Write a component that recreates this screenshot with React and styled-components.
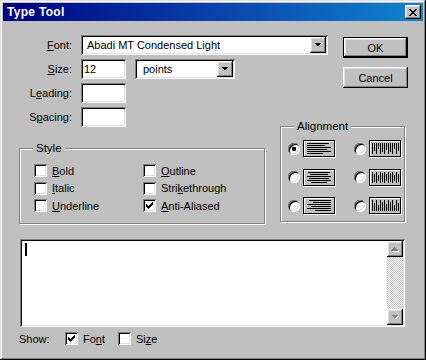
import React from "react";
import styled, { createGlobalStyle, css } from "styled-components";

const GlobalStyle = createGlobalStyle`
  body {
    margin: 0;
    background: #c0c0c0;
    font-family: "Liberation Sans", Arial, sans-serif;
    font-size: 11px;
    color: #000;
  }
`;

const raised = css`
  background: #c0c0c0;
  box-shadow: inset -1px -1px 0 #000, inset 1px 1px 0 #fff,
    inset -2px -2px 0 #808080, inset 2px 2px 0 #dfdfdf;
`;

const sunken = css`
  background: #fff;
  box-shadow: inset 1px 1px 0 #808080, inset -1px -1px 0 #fff,
    inset 2px 2px 0 #000, inset -2px -2px 0 #dfdfdf;
`;

const Window = styled.div`
  box-sizing: border-box;
  width: 426px;
  height: 360px;
  padding: 3px;
  background: #c0c0c0;
  box-shadow: inset -1px -1px 0 #000, inset 1px 1px 0 #dfdfdf,
    inset -2px -2px 0 #808080, inset 2px 2px 0 #fff;
  display: flex;
  flex-direction: column;
`;

const TitleBar = styled.div`
  height: 18px;
  display: flex;
  align-items: center;
  justify-content: space-between;
  padding: 0 2px 0 4px;
  background: linear-gradient(90deg, #000080 0%, #1084d0 100%);
`;

const Title = styled.span`
  color: #fff;
  font-weight: bold;
  font-size: 12px;
  letter-spacing: 0.3px;
`;

const CloseButton = styled.div`
  ${raised};
  width: 16px;
  height: 14px;
  display: flex;
  align-items: center;
  justify-content: center;
`;

const Body = styled.div`
  flex: 1;
  display: flex;
  flex-direction: column;
  padding: 14px 15px 0 16px;
`;

const TopSection = styled.div`
  display: flex;
  justify-content: space-between;
  align-items: flex-start;
`;

const Fields = styled.div`
  display: flex;
  flex-direction: column;
  gap: 4px;
`;

const FieldRow = styled.div`
  display: flex;
  align-items: center;
  height: 20px;
`;

const Label = styled.span`
  width: 53px;
  margin-right: 9px;
  text-align: right;
`;

const TextBox = styled.div`
  ${sunken};
  box-sizing: border-box;
  width: 45px;
  height: 20px;
  padding: 2px 3px;
  line-height: 16px;
`;

const Combo = styled.div`
  ${sunken};
  box-sizing: border-box;
  width: ${(p) => p.$width}px;
  height: 20px;
  margin-left: ${(p) => p.$gap || 0}px;
  padding: 2px 2px 2px ${(p) => p.$indent}px;
  display: flex;
  align-items: center;
  justify-content: space-between;
`;

const DropButton = styled.div`
  ${raised};
  width: 16px;
  height: 16px;
  display: flex;
  align-items: center;
  justify-content: center;
`;

const Buttons = styled.div`
  display: flex;
  flex-direction: column;
  gap: 9px;
  margin-top: 2px;
`;

const Button = styled.div`
  ${raised};
  box-sizing: border-box;
  width: 65px;
  height: 21px;
  display: flex;
  align-items: center;
  justify-content: center;
  ${(p) =>
    p.$default &&
    css`
      box-shadow: inset 0 0 0 1px #000, inset -2px -2px 0 #000,
        inset 2px 2px 0 #fff, inset -3px -3px 0 #808080,
        inset 3px 3px 0 #dfdfdf;
    `}
`;

const GroupsRow = styled.div`
  display: flex;
  justify-content: space-between;
  align-items: flex-start;
  margin-top: -1px;
  padding-right: 3px;
`;

const Group = styled.div`
  position: relative;
  box-sizing: border-box;
  width: ${(p) => p.$width}px;
  height: ${(p) => p.$height}px;
  margin-top: ${(p) => p.$top || 0}px;
  border: 1px solid #808080;
  box-shadow: inset 1px 1px 0 #fff, 1px 1px 0 #fff;
`;

const Legend = styled.span`
  position: absolute;
  top: -8px;
  left: 13px;
  padding: 0 3px;
  background: #c0c0c0;
  line-height: 14px;
  font-size: 11.5px;
`;

const StyleGrid = styled.div`
  display: grid;
  grid-template-columns: 109px auto;
  grid-auto-rows: 17.5px;
  padding: 13px 0 0 14px;
`;

const CheckItem = styled.label`
  display: flex;
  align-items: center;
  gap: 5px;
  width: ${(p) => (p.$width ? `${p.$width}px` : "auto")};
`;

const Box = styled.span`
  ${sunken};
  flex: none;
  width: 13px;
  height: 13px;
  display: flex;
  align-items: center;
  justify-content: center;
`;

const AlignGrid = styled.div`
  display: grid;
  grid-template-columns: 66px 66px;
  grid-auto-rows: 17px;
  row-gap: 11.5px;
  padding: 13px 0 0 7px;
`;

const AlignCell = styled.div`
  display: flex;
  align-items: center;
  gap: 3px;
`;

const Radio = styled.span`
  flex: none;
  position: relative;
  width: 12px;
  height: 12px;
  border-radius: 50%;
  background: #fff;
  box-shadow: inset 1px 1px 0 #808080, inset -1px -1px 0 #fff,
    inset 2px 2px 0 #000, inset -2px -2px 0 #dfdfdf;
  ${(p) =>
    p.$checked &&
    css`
      &::after {
        content: "";
        position: absolute;
        left: 4px;
        top: 4px;
        width: 4px;
        height: 4px;
        border-radius: 1px;
        background: #000;
      }
    `}
`;

const IconBox = styled.div`
  flex: none;
  width: 32px;
  height: 17px;
  box-sizing: border-box;
  border: 1px solid #000;
  box-shadow: 1px 1px 0 #fff, inset 1px 1px 0 #fff;
  display: flex;
`;

const TextArea = styled.div`
  ${sunken};
  box-sizing: border-box;
  height: 88px;
  margin: 15px 3px 0 1px;
  padding: 2px;
  display: flex;
`;

const TextContent = styled.div`
  flex: 1;
  padding: 2px 0 0 3px;
`;

const Caret = styled.div`
  width: 2px;
  height: 13px;
  background: #000;
`;

const ScrollBar = styled.div`
  width: 16px;
  display: flex;
  flex-direction: column;
`;

const ScrollButton = styled.div`
  ${raised};
  width: 16px;
  height: 16px;
  display: flex;
  align-items: center;
  justify-content: center;
`;

const Track = styled.div`
  flex: 1;
  background-color: #c0c0c0;
  background-image: conic-gradient(#fff 25%, #c0c0c0 0 50%, #fff 0 75%, #c0c0c0 0);
  background-size: 2px 2px;
`;

const ShowRow = styled.div`
  display: flex;
  align-items: center;
  height: 13px;
  margin-top: 5px;
`;

const ShowLabel = styled.span`
  width: 46px;
`;

const Check = () => (
  <svg width="7" height="7" viewBox="0 0 7 7" shapeRendering="crispEdges">
    <path d="M6 0h1v1H6zM5 1h2v1H5zM0 2h1v1H0zM4 2h3v1H4zM0 3h2v1H0zM3 3h3v1H3zM0 4h5v1H0zM1 5h3v1H1zM2 6h1v1H2z" fill="#000" />
  </svg>
);

const CheckBox = ({ checked, children, width }) => (
  <CheckItem $width={width}>
    <Box>{checked && <Check />}</Box>
    <span>{children}</span>
  </CheckItem>
);

const Arrow = ({ up, disabled }) => (
  <svg width="8" height="5" viewBox="0 0 8 5" shapeRendering="crispEdges">
    {disabled && (
      <polygon
        points={up ? "4.5,1 8,4.5 1,4.5" : "1,1 8,1 4.5,4.5"}
        fill="#fff"
      />
    )}
    <polygon
      points={up ? "3.5,0 7,3.5 0,3.5" : "0,0 7,0 3.5,3.5"}
      fill={disabled ? "#808080" : "#000"}
    />
  </svg>
);

const lineLengths = [22, 18, 24, 20, 24, 16];
const barHeights = [11, 8, 11, 6, 11, 9, 11, 7, 11, 9, 11, 6, 11, 8];

const AlignIcon = ({ kind }) => {
  let shapes;
  if (kind === "left" || kind === "center" || kind === "right") {
    shapes = lineLengths.map((len, i) => {
      const x = kind === "left" ? 3 : kind === "right" ? 27 - len : 15 - len / 2;
      return <rect key={i} x={x} y={2 + i * 2} width={len} height="1" />;
    });
  } else {
    shapes = barHeights.map((h, i) => {
      const y = kind === "top" ? 2 : kind === "bottom" ? 13 - h : 7.5 - h / 2;
      return <rect key={i} x={2 + i * 2} y={Math.round(y)} width="1" height={h} />;
    });
  }
  return (
    <IconBox>
      <svg width="30" height="15" viewBox="0 0 30 15" shapeRendering="crispEdges" fill="#000">
        {shapes}
      </svg>
    </IconBox>
  );
};

const alignments = [
  ["left", "top"],
  ["center", "middle"],
  ["right", "bottom"],
];

export default function App() {
  return (
    <>
      <GlobalStyle />
      <Window>
        <TitleBar>
          <Title>Type Tool</Title>
          <CloseButton>
            <svg width="8" height="7" viewBox="0 0 8 7" shapeRendering="crispEdges">
              <path
                d="M0 0h2v1H0zM6 0h2v1H6zM1 1h2v1H1zM5 1h2v1H5zM2 2h4v1H2zM3 3h2v1H3zM2 4h4v1H2zM1 5h2v1H1zM5 5h2v1H5zM0 6h2v1H0zM6 6h2v1H6z"
                fill="#000"
              />
            </svg>
          </CloseButton>
        </TitleBar>
        <Body>
          <TopSection>
            <Fields>
              <FieldRow>
                <Label>
                  <u>F</u>ont:
                </Label>
                <Combo $width={247} $indent={6}>
                  <span>Abadi MT Condensed Light</span>
                  <DropButton>
                    <Arrow />
                  </DropButton>
                </Combo>
              </FieldRow>
              <FieldRow>
                <Label>
                  <u>S</u>ize:
                </Label>
                <TextBox>12</TextBox>
                <Combo $width={100} $indent={8} $gap={9}>
                  <span>points</span>
                  <DropButton>
                    <Arrow />
                  </DropButton>
                </Combo>
              </FieldRow>
              <FieldRow>
                <Label>
                  L<u>e</u>ading:
                </Label>
                <TextBox />
              </FieldRow>
              <FieldRow>
                <Label>
                  S<u>p</u>acing:
                </Label>
                <TextBox />
              </FieldRow>
            </Fields>
            <Buttons>
              <Button $default>OK</Button>
              <Button>Cancel</Button>
            </Buttons>
          </TopSection>

          <GroupsRow>
            <Group $width={246} $height={76} $top={22}>
              <Legend>Style</Legend>
              <StyleGrid>
                <CheckBox>
                  <u>B</u>old
                </CheckBox>
                <CheckBox>
                  <u>O</u>utline
                </CheckBox>
                <CheckBox>
                  <u>I</u>talic
                </CheckBox>
                <CheckBox>
                  Stri<u>k</u>ethrough
                </CheckBox>
                <CheckBox>
                  <u>U</u>nderline
                </CheckBox>
                <CheckBox checked>
                  <u>A</u>nti-Aliased
                </CheckBox>
              </StyleGrid>
            </Group>
            <Group $width={125} $height={96}>
              <Legend>Alignment</Legend>
              <AlignGrid>
                {alignments.map(([h, v], i) => (
                  <React.Fragment key={h}>
                    <AlignCell>
                      <Radio $checked={i === 0} />
                      <AlignIcon kind={h} />
                    </AlignCell>
                    <AlignCell>
                      <Radio />
                      <AlignIcon kind={v} />
                    </AlignCell>
                  </React.Fragment>
                ))}
              </AlignGrid>
            </Group>
          </GroupsRow>

          <TextArea>
            <TextContent>
              <Caret />
            </TextContent>
            <ScrollBar>
              <ScrollButton>
                <Arrow up disabled />
              </ScrollButton>
              <Track />
              <ScrollButton>
                <Arrow disabled />
              </ScrollButton>
            </ScrollBar>
          </TextArea>

          <ShowRow>
            <ShowLabel>Show:</ShowLabel>
            <CheckBox checked width={53}>
              Fo<u>n</u>t
            </CheckBox>
            <CheckBox>
              Si<u>z</u>e
            </CheckBox>
          </ShowRow>
        </Body>
      </Window>
    </>
  );
}
